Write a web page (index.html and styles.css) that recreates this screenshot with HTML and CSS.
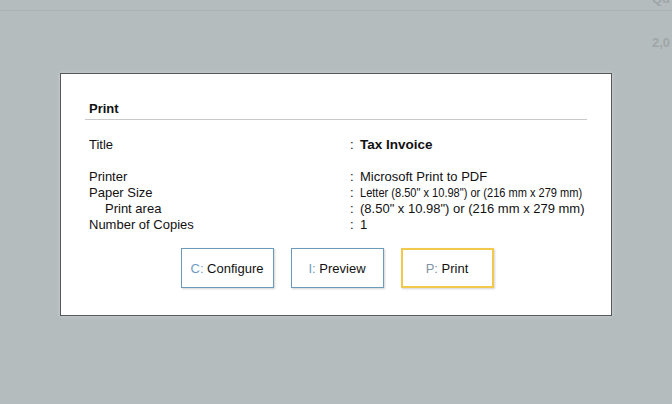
FILE: index.html
```html
<!DOCTYPE html>
<html>
<head>
    <title>Print</title>
    <link rel="stylesheet" href="styles.css">
</head>
<body>

    <!-- Pantalla de fondo -->
    <div class="backdrop">
        <div class="bg_head"><span class="bg_text">Qu</span></div>
        <div class="bg_row"><span class="bg_text">2,0</span></div>
    </div>

    <!-- Diálogo de impresión -->
    <div class="dialog">
        <div class="dialog_title">Print</div>

        <div class="info">
            <div class="label">Title</div>
            <div class="colon">:</div>
            <div class="value strong">Tax Invoice</div>

            <div class="spacer"></div>

            <div class="label">Printer</div>
            <div class="colon">:</div>
            <div class="value">Microsoft Print to PDF</div>

            <div class="label">Paper Size</div>
            <div class="colon">:</div>
            <div class="value"><span class="narrow">Letter (8.50" x 10.98") or (216 mm x 279 mm)</span></div>

            <div class="label indent">Print area</div>
            <div class="colon">:</div>
            <div class="value">(8.50" x 10.98") or (216 mm x 279 mm)</div>

            <div class="label">Number of Copies</div>
            <div class="colon">:</div>
            <div class="value">1</div>
        </div>

        <div class="actions">
            <button type="button" class="dlg_btn"><span class="key">C:</span> Configure</button>
            <button type="button" class="dlg_btn"><span class="key">I:</span> Preview</button>
            <button type="button" class="dlg_btn active"><span class="key">P:</span> Print</button>
        </div>
    </div>

</body>
</html>
```

FILE: styles.css
```css
/* Estilos generales */
body {
    margin: 0;
    background-color: #b5bcbd;
    font-family: "Liberation Sans", Arial, sans-serif;
    font-size: 13px;
    color: #111;
    width: 672px;
    height: 404px;
    overflow: hidden;
    position: relative;
}

/* Fondo detrás del diálogo */
.bg_head {
    height: 10px;
    overflow: hidden;
    border-bottom: 1px solid #adb3b4;
    padding-left: 652px;
}

.bg_head .bg_text {
    display: block;
    margin-top: -9px;
}

.bg_row {
    padding-top: 24px;
    padding-left: 652px;
}

.bg_text {
    color: #a0a6a8;
    font-weight: bold;
    line-height: 16px;
}

/* Diálogo */
.dialog {
    position: absolute;
    left: 60px;
    top: 73px;
    width: 502px;
    padding: 27px 24px 27px 24px;
    background-color: #fff;
    border: 1px solid #54595b;
    box-shadow: 0 0 4px rgba(255, 255, 255, 0.35);
}

.dialog_title {
    font-weight: bold;
    line-height: 16px;
    padding: 0 0 2px 4px;
    border-bottom: 1px solid #c9c9c9;
}

/* Tabla de datos */
.info {
    display: grid;
    grid-template-columns: 261px 10px 1fr;
    line-height: 16px;
    padding-left: 4px;
    margin-top: 17px;
}

.spacer {
    grid-column: 1 / 4;
    height: 16px;
}

.indent {
    padding-left: 16px;
}

.value.strong {
    font-weight: bold;
    font-size: 13.5px;
}

.narrow {
    display: inline-block;
    transform: scaleX(0.85);
    transform-origin: left center;
    white-space: nowrap;
}

/* Botones */
.actions {
    display: flex;
    justify-content: center;
    gap: 17px;
    margin-top: 15px;
    padding-left: 2px;
}

.dlg_btn {
    width: 93px;
    height: 40px;
    background-color: #fff;
    border: 1px solid #6c9ab8;
    box-shadow: 1px 1px 2px rgba(0, 0, 0, 0.18);
    font-family: "Liberation Sans", Arial, sans-serif;
    font-size: 13px;
    color: #111;
    padding: 0;
    cursor: pointer;
}

.dlg_btn.active {
    border: 2px solid #f2c94c;
}

.key {
    color: #6f9cc0;
}

.active .key {
    color: #7f93a4;
}
```
